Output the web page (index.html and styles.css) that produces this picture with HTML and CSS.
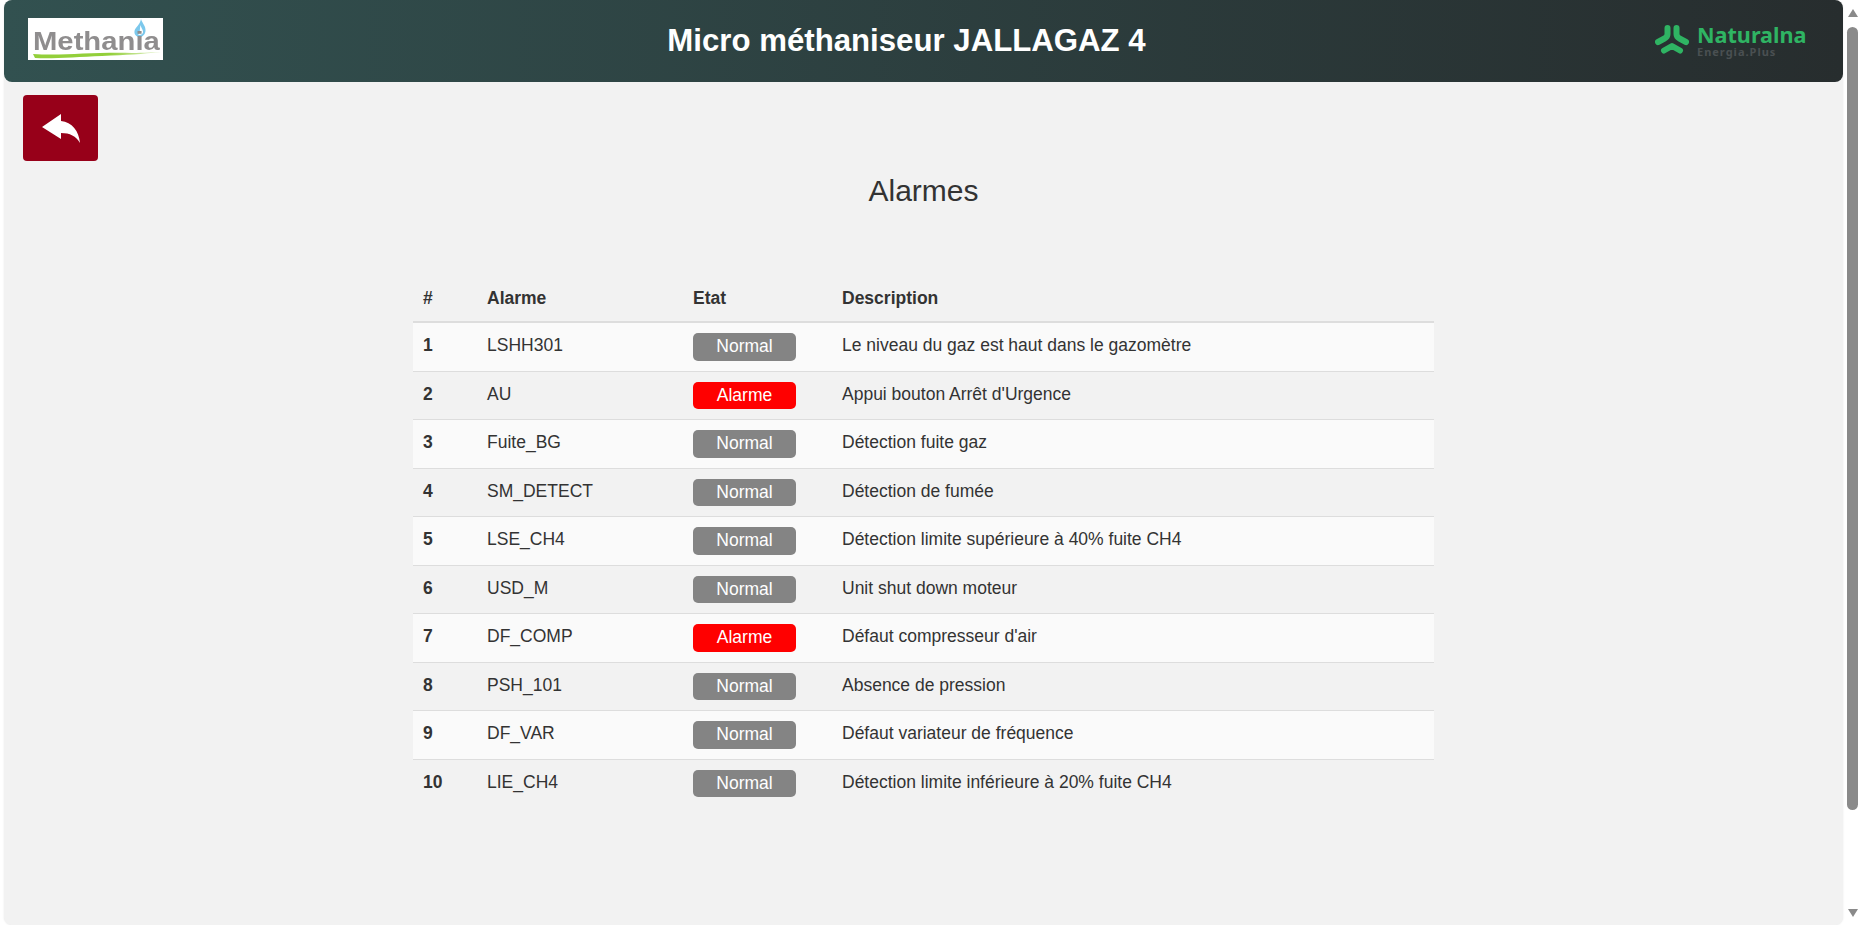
FILE: index.html
```html
<!DOCTYPE html>
<html lang="fr">
<head>
  <meta charset="UTF-8">
  <meta name="viewport" content="width=device-width, initial-scale=1.0">
  <title>Alarmes</title>
  <link rel="stylesheet" href="styles.css">
</head>
<body>
  <div class="page">
    <header class="topbar">
      <div class="logo-methania">
        <svg class="flame" viewBox="0 0 12 18" width="12" height="18">
          <path d="M7 0 C8 4 12 7 11.500 12 C11 16 8 18 5.500 18 C2.500 18 0 15.500 0.500 12 C1 8.500 6 6 7 0 Z" fill="#7cc8ec"/>
          <path d="M6.500 6 C7 9 9.500 11 9 13.500 C8.500 15.500 6 16.500 4 15.500 C6.500 14 5.500 10 6.500 6 Z" fill="#ffffff"/>
        </svg>
        <span class="methania-text">Methania</span>
        <svg class="swoosh" viewBox="0 0 130 7" width="130" height="7">
          <defs>
            <linearGradient id="swooshFade">
              <stop offset="0.6" stop-color="#93cf3a"/>
              <stop offset="1" stop-color="#e8f4d4"/>
            </linearGradient>
          </defs>
          <path d="M1 2 C30 4 60 0 100 1 C112 1 122 0 129 0 C110 2 95 3 70 4 C45 5 20 7 3 6 Z" fill="url(#swooshFade)"/>
        </svg>
      </div>
      <h1 class="topbar-title">Micro méthaniseur JALLAGAZ 4</h1>
      <div class="logo-naturalna">
        <svg class="naturalna-icon" viewBox="0 0 34 29" width="34" height="29">
          <path d="M12.500 3 V9 Q12.500 12 9.500 13.500 L3 17 M21.500 3 V9 Q21.500 12 24.500 13.500 L31 17 M9 25.500 L17 21 L25 25.500" fill="none" stroke="#2fb463" stroke-width="6" stroke-linecap="round" stroke-linejoin="round"/>
        </svg>
        <div class="naturalna-text">
          <div class="naturalna-name">Naturalna</div>
          <div class="naturalna-sub">Energia.Plus</div>
        </div>
      </div>
    </header>

    <main class="content">
      <button class="back-btn" type="button" aria-label="Retour">
        <svg viewBox="0 0 38 29" width="38" height="29">
          <path d="M0 13 L19 0 V7 C30 8 37 17 38 29 C34 22 28 19 19 19 V25 Z" fill="#ffffff"/>
        </svg>
      </button>

      <h2 class="page-title">Alarmes</h2>

      <table class="alarm-table">
        <thead>
          <tr>
            <th class="col-num">#</th>
            <th class="col-name">Alarme</th>
            <th class="col-state">Etat</th>
            <th>Description</th>
          </tr>
        </thead>
        <tbody>
          <tr>
            <td class="num">1</td>
            <td>LSHH301</td>
            <td><span class="badge normal">Normal</span></td>
            <td>Le niveau du gaz est haut dans le gazomètre</td>
          </tr>
          <tr>
            <td class="num">2</td>
            <td>AU</td>
            <td><span class="badge alarm">Alarme</span></td>
            <td>Appui bouton Arrêt d'Urgence</td>
          </tr>
          <tr>
            <td class="num">3</td>
            <td>Fuite_BG</td>
            <td><span class="badge normal">Normal</span></td>
            <td>Détection fuite gaz</td>
          </tr>
          <tr>
            <td class="num">4</td>
            <td>SM_DETECT</td>
            <td><span class="badge normal">Normal</span></td>
            <td>Détection de fumée</td>
          </tr>
          <tr>
            <td class="num">5</td>
            <td>LSE_CH4</td>
            <td><span class="badge normal">Normal</span></td>
            <td>Détection limite supérieure à 40% fuite CH4</td>
          </tr>
          <tr>
            <td class="num">6</td>
            <td>USD_M</td>
            <td><span class="badge normal">Normal</span></td>
            <td>Unit shut down moteur</td>
          </tr>
          <tr>
            <td class="num">7</td>
            <td>DF_COMP</td>
            <td><span class="badge alarm">Alarme</span></td>
            <td>Défaut compresseur d'air</td>
          </tr>
          <tr>
            <td class="num">8</td>
            <td>PSH_101</td>
            <td><span class="badge normal">Normal</span></td>
            <td>Absence de pression</td>
          </tr>
          <tr>
            <td class="num">9</td>
            <td>DF_VAR</td>
            <td><span class="badge normal">Normal</span></td>
            <td>Défaut variateur de fréquence</td>
          </tr>
          <tr>
            <td class="num">10</td>
            <td>LIE_CH4</td>
            <td><span class="badge normal">Normal</span></td>
            <td>Détection limite inférieure à 20% fuite CH4</td>
          </tr>
        </tbody>
      </table>
    </main>
  </div>

  <div class="scrollbar">
    <span class="arrow-up"></span>
    <span class="thumb"></span>
    <span class="arrow-down"></span>
  </div>
</body>
</html>
```

FILE: styles.css
```css
html, body {
  height: 100%;
}

body {
  display: flex;
  margin: 0;
  overflow: hidden;
  background-color: #fff;
  color: #333;
  font-family: "Liberation Sans", Arial, sans-serif;
  font-size: 17.5px;
  line-height: 24px;
}

.page {
  display: flex;
  flex-direction: column;
  flex: 1;
  min-width: 0;
  margin-left: 4px;
  border-radius: 8px;
  background-color: #f2f2f2;
  box-shadow: 0 0 2px rgba(0, 0, 0, 0.1);
}

/* Header */
.topbar {
  display: flex;
  align-items: center;
  justify-content: space-between;
  height: 82px;
  padding: 0 24px;
  border-radius: 8px;
  background: linear-gradient(to right, #325150, #272d2e);
}

.topbar-title {
  margin: 0;
  color: #fff;
  font-size: 31.2px;
  font-weight: bold;
  line-height: 1.2;
}

.logo-methania {
  position: relative;
  width: 135px;
  height: 42px;
  margin-top: -4px;
  overflow: hidden;
  background-color: #fff;
}

.methania-text {
  position: absolute;
  left: 5px;
  top: 8px;
  color: #8f8d8e;
  font-size: 25px;
  font-weight: bold;
  line-height: 30px;
  transform: scaleX(1.17);
  transform-origin: left center;
  filter: blur(0.4px);
}

.flame {
  position: absolute;
  right: 17px;
  top: 1px;
}

.swoosh {
  position: absolute;
  left: 4px;
  top: 34px;
}

.logo-naturalna {
  display: flex;
  align-items: flex-start;
  gap: 8px;
  box-sizing: border-box;
  width: 169px;
  padding-left: 5px;
}

.naturalna-name {
  color: #2fb463;
  font-family: "Noto Sans", sans-serif;
  font-size: 21.6px;
  font-weight: 700;
  line-height: 20px;
}

.naturalna-sub {
  margin-top: 1px;
  color: #4a5052;
  font-family: "Noto Sans", sans-serif;
  font-size: 11px;
  font-weight: 700;
  letter-spacing: 1px;
  line-height: 11px;
}

/* Content */
.content {
  flex: 1;
  padding: 13px 19px 0;
}

.back-btn {
  display: flex;
  align-items: center;
  justify-content: center;
  width: 75px;
  height: 66px;
  padding: 0;
  border: none;
  border-radius: 4px;
  background-color: #970019;
}

.page-title {
  margin: 10px 0 64px;
  font-size: 30px;
  font-weight: normal;
  line-height: 40px;
  text-align: center;
}

.alarm-table {
  width: 1021px;
  margin: 0 auto;
  border-collapse: collapse;
  table-layout: fixed;
}

.alarm-table th {
  padding: 11px 10px 11px;
  border-bottom: 2px solid #ddd;
  text-align: left;
}

.alarm-table td {
  padding: 10px;
  border-bottom: 1px solid #ddd;
  vertical-align: top;
}

.alarm-table tbody tr:nth-child(odd) {
  background-color: #fafafa;
}

.alarm-table tbody tr:last-child td {
  border-bottom: none;
}

.col-num {
  width: 44px;
}

.col-name {
  width: 186px;
}

.col-state {
  width: 129px;
}

.alarm-table .num {
  font-weight: bold;
}

.badge {
  display: block;
  width: 103px;
  padding: 1px 0 2.5px;
  border-radius: 5px;
  color: #fff;
  text-align: center;
}

.badge.normal {
  background-color: #848484;
}

.badge.alarm {
  background-color: #f00;
}

/* Scrollbar */
.scrollbar {
  display: flex;
  flex-direction: column;
  align-items: center;
  flex: 0 0 19px;
  padding: 9px 0 8px;
  box-sizing: border-box;
  height: 925px;
}

.arrow-up,
.arrow-down {
  width: 0;
  height: 0;
  border-left: 5px solid transparent;
  border-right: 5px solid transparent;
}

.arrow-up {
  border-bottom: 8px solid #8a8a8a;
}

.arrow-down {
  margin-top: auto;
  border-top: 8px solid #8a8a8a;
}

.thumb {
  width: 11px;
  height: 783px;
  margin-top: 10px;
  border-radius: 6px;
  background-color: #8a8a8a;
}
```
